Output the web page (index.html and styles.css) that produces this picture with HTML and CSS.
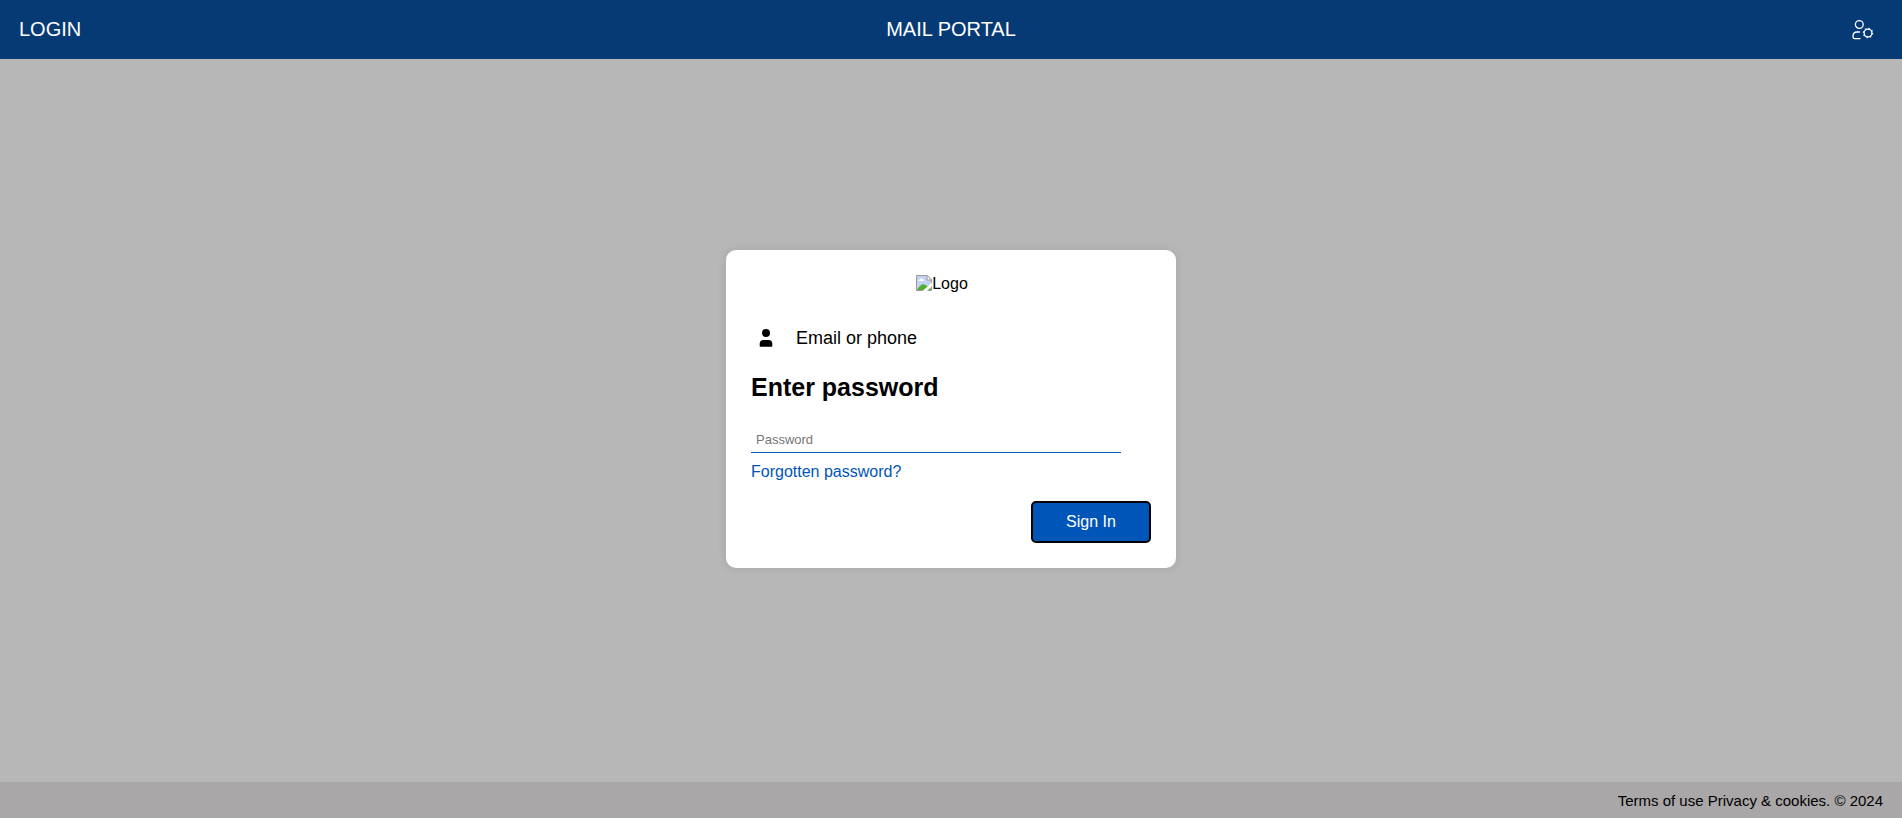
FILE: index.html
```html
<!DOCTYPE html>
<html lang="en">
<head>
  <meta charset="UTF-8">
  <meta name="viewport" content="width=device-width, initial-scale=1.0">
  <title>Mail Portal</title>
  <link rel="stylesheet" href="styles.css">
</head>
<body>
  <header class="navbar">
    <div class="navbar-login">LOGIN</div>
    <div class="navbar-title">MAIL PORTAL</div>
    <svg class="navbar-icon" viewBox="0 0 22 22" fill="none" stroke="currentColor" stroke-width="1.3" stroke-linecap="round">
      <circle cx="7.3" cy="5.5" r="3.9"/>
      <path d="M7.5 13H5Q1 13 1 17V18Q1 19.6 2.6 19.6H8"/>
      <circle cx="16" cy="14" r="3.9"/>
      <circle cx="16" cy="14" r="4.6" stroke-width="1.2" stroke-dasharray="1.4 2.2" stroke-linecap="butt"/>
    </svg>
  </header>

  <main class="container">
    <form class="card">
      <div class="logo">
        <svg class="logo-img" viewBox="0 0 16 16">
          <path d="M0.5 0.5H11L15.5 5V15.5H0.5Z" fill="#c3d3f5" stroke="#9a9a9a"/>
          <path d="M11 0.5V5H15.5Z" fill="#fff" stroke="#9a9a9a"/>
          <path d="M2.5 6Q2.5 4.5 4 4.5Q5 2.5 6.5 4Q8.3 4 8.3 6Z" fill="#fff"/>
          <path d="M1 15Q6 6 11 11L15 14V15Z" fill="#56ab32"/>
          <path d="M6.5 16L16 7.5V11L11 16Z" fill="#fff"/>
        </svg>
        <span>Logo</span>
      </div>
      <div class="account">
        <svg class="account-icon" viewBox="0 0 20 20">
          <circle cx="10" cy="5" r="4"/>
          <path d="M3.7 18V16Q3.7 12 7.5 12H12.5Q16.3 12 16.3 16V18Q16.3 18.7 15.5 18.7H4.5Q3.7 18.7 3.7 18Z"/>
        </svg>
        <span>Email or phone</span>
      </div>
      <h1><label for="password">Enter password</label></h1>
      <input type="password" id="password" class="password" placeholder="Password">
      <a class="forgot" href="#">Forgotten password?</a>
      <button type="submit" class="sign-in">Sign In</button>
    </form>
  </main>

  <footer class="footer">Terms of use Privacy &amp; cookies. © 2024</footer>
</body>
</html>
```
FILE: styles.css
```css
* {
  box-sizing: border-box;
}
body {
  font-family: Arial, "Liberation Sans", sans-serif;
  margin: 0;
  background-color: #b7b7b7;
  color: #000;
}
.navbar {
  position: fixed;
  top: 0;
  left: 0;
  width: 100%;
  display: grid;
  grid-template-columns: 1fr auto 1fr;
  align-items: center;
  padding: 18px 19px;
  background-color: #063a75;
  color: #fff;
  font-size: 20px;
  line-height: 23px;
}
.navbar-icon {
  width: 22px;
  height: 22px;
  justify-self: end;
  margin-right: 9px;
}
.container {
  min-height: 100vh;
  display: flex;
  align-items: center;
  justify-content: center;
}
.card {
  width: 450px;
  max-width: 100%;
  display: flex;
  flex-direction: column;
  padding: 25px;
  background-color: #fff;
  border-radius: 10px;
  box-shadow: 0 0 10px rgba(0, 0, 0, 0.1);
}
.logo {
  display: flex;
  justify-content: center;
  margin-right: 18px;
  line-height: 18px;
}
.logo-img {
  width: 16px;
  height: 16px;
}
.account {
  display: flex;
  align-items: center;
  gap: 20px;
  padding: 0 5px;
  margin-top: 35px;
  font-size: 18px;
  line-height: 20px;
}
.account-icon {
  width: 20px;
  height: 20px;
}
h1 {
  margin: 24px 0 25px;
  font-size: 25px;
  line-height: 30px;
}
.password {
  width: 370px;
  max-width: 100%;
  height: 26px;
  padding: 0 5px;
  border: none;
  border-bottom: 1px solid #0060c0;
  font-family: inherit;
  font-size: 13px;
  outline: none;
}
.forgot {
  align-self: flex-start;
  margin-top: 10px;
  color: #0056b8;
  line-height: 18px;
  text-decoration: none;
}
.sign-in {
  align-self: flex-end;
  width: 120px;
  height: 42px;
  margin-top: 20px;
  border: 2px solid #000;
  border-radius: 5px;
  background-color: #0056b8;
  color: #fff;
  font-family: inherit;
  font-size: 16px;
  cursor: pointer;
}
.footer {
  position: fixed;
  bottom: 0;
  left: 0;
  width: 100%;
  padding: 11px 19px 9px;
  background-color: #a9a7a7;
  font-size: 15px;
  line-height: 16px;
  text-align: right;
}
```
